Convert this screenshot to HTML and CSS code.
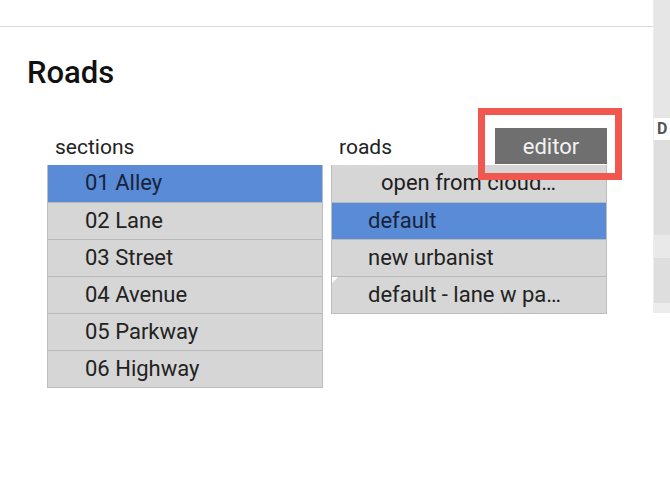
FILE: index.html
```html
<!DOCTYPE html>
<html lang="en">
<head>
    <meta charset="UTF-8">
    <meta name="viewport" content="width=device-width, initial-scale=1.0">
    <title>Roads</title>
    <link rel="stylesheet" href="styles.css">
</head>
<body>
    <div class="page">
        <div class="main">
            <div class="topbar"></div>

            <h1>Roads</h1>

            <div class="columns">
                <div class="column">
                    <div class="column-head">
                        <span class="label">sections</span>
                    </div>
                    <ul class="list">
                        <li class="selected">01 Alley</li>
                        <li>02 Lane</li>
                        <li>03 Street</li>
                        <li>04 Avenue</li>
                        <li>05 Parkway</li>
                        <li>06 Highway</li>
                    </ul>
                </div>

                <div class="column">
                    <div class="column-head">
                        <span class="label">roads</span>
                        <button class="editor" type="button">editor</button>
                        <div class="highlight"></div>
                    </div>
                    <ul class="list roads">
                        <li class="action">open from cloud…</li>
                        <li class="selected">default</li>
                        <li>new urbanist</li>
                        <li class="marked">default - lane w pa…</li>
                    </ul>
                </div>
            </div>
        </div>

        <!-- edge of the neighbouring panel -->
        <div class="side">
            <div class="side-top"></div>
            <div class="side-tab">D</div>
            <div class="side-block"></div>
            <div class="side-band"></div>
            <div class="side-block short"></div>
            <div class="side-foot"></div>
        </div>
    </div>
</body>
</html>
```

FILE: styles.css
```css
body {
    margin: 0;
    font-family: Roboto, "Liberation Sans", Arial, sans-serif;
    color: #222;
    background: #fff;
}
.page {
    display: flex;
    align-items: flex-start;
    width: 670px;
    height: 484px;
    overflow: hidden;
}
.main {
    flex: 1;
}
.topbar {
    height: 26px;
    border-bottom: 1px solid #dcdcdc;
}
h1 {
    margin: 28px 0 0 27px;
    font-size: 31px;
    font-weight: 500;
    line-height: 36px;
    color: #111;
}
.columns {
    display: flex;
    gap: 8px;
    margin: 29px 0 0 47px;
}
.column {
    width: 276px;
}
.column-head {
    position: relative;
    display: flex;
    align-items: flex-end;
    justify-content: space-between;
    height: 45px;
    padding-left: 8px;
}
.label {
    font-size: 21px;
    line-height: 26px;
    padding-bottom: 5px;
}
.editor {
    width: 112px;
    height: 36px;
    margin-bottom: 1px;
    background-color: #6f6f6f;
    color: #f2f2f2;
    border: none;
    font-family: Roboto, "Liberation Sans", Arial, sans-serif;
    font-size: 22px;
}
.highlight {
    position: absolute;
    z-index: 2;
    left: 147px;
    top: -12px;
    width: 130px;
    height: 58px;
    border: 7px solid #f0574f;
}
.list {
    list-style: none;
    margin: 0;
    padding: 0;
    border: 1px solid #bdbdbd;
    border-top: none;
}
.list li {
    position: relative;
    height: 36px;
    line-height: 36px;
    padding-left: 37px;
    font-size: 22px;
    background-color: #d6d6d6;
    border-top: 1px solid #b9b9b9;
    white-space: nowrap;
    overflow: hidden;
}
.list li:first-child {
    border-top: none;
    height: 37px;
}
.list li.selected {
    background-color: #5a8bd6;
    color: #17233a;
}
.roads li {
    padding-left: 36px;
}
.roads li.action {
    padding-left: 49px;
    color: #1e1e1e;
}
.roads li.marked::before {
    content: "";
    position: absolute;
    left: 0;
    top: 0;
    border-top: 6px solid #fff;
    border-right: 6px solid transparent;
}
.side {
    width: 16px;
    height: 313px;
    background-color: #e6e6e6;
    border-left: 1px solid #ececec;
}
.side-top {
    height: 118px;
}
.side-tab {
    height: 22px;
    background: #fff;
    padding-left: 3px;
    font-size: 16px;
    font-weight: bold;
    line-height: 22px;
    color: #555;
}
.side-block {
    height: 95px;
    background-color: #dedede;
}
.side-band {
    height: 23px;
    background-color: #e9e9e9;
}
.side-block.short {
    height: 45px;
}
.side-foot {
    height: 10px;
    background-color: #ececec;
}
```
